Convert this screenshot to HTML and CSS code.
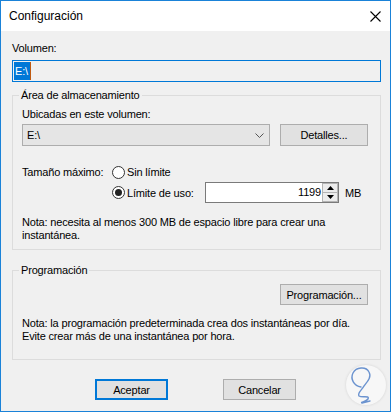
FILE: index.html
```html
<!DOCTYPE html>
<html lang="es">
<head>
    <meta charset="UTF-8">
    <meta name="viewport" content="width=device-width, initial-scale=1.0">
    <title>Configuración</title>
    <link rel="stylesheet" href="styles.css">
</head>
<body>
    <div class="window">
        <div class="titlebar">
            <span class="title">Configuración</span>
            <svg class="close" width="11" height="11" viewBox="0 0 11 11">
                <path d="M0.5 0.5 L10.5 10.5 M10.5 0.5 L0.5 10.5" stroke="#000" stroke-width="1.1" fill="none"/>
            </svg>
        </div>

        <div class="content">
            <div class="label">Volumen:</div>
            <div class="volume-box"><span class="selected">E:\</span><span class="caret"></span></div>

            <fieldset class="group storage">
                <legend>Área de almacenamiento</legend>
                <div class="label first">Ubicadas en este volumen:</div>
                <div class="combo-row">
                    <div class="combo">
                        <span>E:\</span>
                        <svg class="chevron" width="9" height="5" viewBox="0 0 9 5">
                            <path d="M0.5 0.5 L4.5 4.5 L8.5 0.5" stroke="#555" stroke-width="1" fill="none"/>
                        </svg>
                    </div>
                    <button class="btn details">Detalles...</button>
                </div>

                <div class="size-grid">
                    <div class="size-label">Tamaño máximo:</div>
                    <label class="radio row1"><span class="circle"></span>Sin límite</label>
                    <label class="radio row2"><span class="circle checked"></span>Límite de uso:</label>
                    <div class="spin">
                        <span class="spin-value">1199</span>
                        <div class="spin-buttons">
                            <span class="spin-btn">
                                <svg width="7" height="4" viewBox="0 0 7 4"><path d="M3.5 0 L7 4 L0 4 Z" fill="#000"/></svg>
                            </span>
                            <span class="spin-btn">
                                <svg width="7" height="4" viewBox="0 0 7 4"><path d="M0 0 L7 0 L3.5 4 Z" fill="#000"/></svg>
                            </span>
                        </div>
                    </div>
                    <span class="unit">MB</span>
                </div>

                <p class="note storage-note">Nota: necesita al menos 300 MB de espacio libre para crear una<br>instantánea.</p>
            </fieldset>

            <fieldset class="group schedule">
                <legend>Programación</legend>
                <button class="btn program">Programación...</button>
                <p class="note schedule-note">Nota: la programación predeterminada crea dos instantáneas por día.<br>Evite crear más de una instantánea por hora.</p>
            </fieldset>

            <div class="actions">
                <button class="btn action default">Aceptar</button>
                <button class="btn action">Cancelar</button>
            </div>
        </div>

        <div class="watermark">
            <svg width="40" height="40" viewBox="0 0 40 40">
                <path d="M15 22 C8 21 4 14 7 8 C10 2 20 1 23 7 C26 12 21 17 18 21 C16 25 11 28 13 31 C16 33 24 30 22 34 C20 37 14 37 16 38 L24 36"
                      stroke="#6b93cf" stroke-width="1.4" fill="none" stroke-linecap="round" stroke-linejoin="round"/>
            </svg>
        </div>
    </div>
</body>
</html>
```

FILE: styles.css
```css
body {
    margin: 0;
    padding: 0;
    font-family: "Liberation Sans", Arial, sans-serif;
    font-size: 11px;
    letter-spacing: -0.17px;
    color: #000;
    background: #f0f0f0;
}
.window {
    position: relative;
    width: 391px;
    height: 412px;
    box-sizing: border-box;
    border: 1px solid #1a82d8;
    background: #f0f0f0;
}
.titlebar {
    height: 30px;
    background: #fff;
    display: flex;
    align-items: center;
    justify-content: space-between;
    padding-left: 8px;
}
.title {
    font-size: 12px;
    letter-spacing: 0;
    line-height: 30px;
}
.close {
    margin-right: 9px;
}
.content {
    padding: 11px 9px 0 11px;
}
.label {
    line-height: 13px;
}
.label.first {
    margin-top: 6px;
}
.volume-box {
    margin-top: 5px;
    height: 22px;
    box-sizing: border-box;
    border: 1px solid #0078d7;
    background: #f0f0f0;
    padding: 1px 0 1px 1px;
    display: flex;
}
.selected {
    display: inline-block;
    height: 18px;
    line-height: 18px;
    padding: 0 2px 0 1px;
    background: #0078d7;
    color: #fff;
}
.caret {
    width: 1px;
    height: 18px;
    background: #c05a10;
}

/* group boxes */
.group {
    margin: 0;
    border: 1px solid #dcdcdc;
    padding: 0 12px 7px 9px;
    min-width: 0;
}
.group legend {
    padding: 0 2px;
    margin-left: -3px;
    line-height: 13px;
}
.storage {
    margin-top: 7px;
}
.schedule {
    margin-top: 14px;
    padding-bottom: 16px;
}
.combo-row {
    margin-top: 3px;
    display: flex;
    gap: 10px;
}
.combo {
    width: 248px;
    height: 22px;
    box-sizing: border-box;
    border: 1px solid #adadad;
    background: #e5e5e5;
    display: flex;
    align-items: center;
    justify-content: space-between;
    padding: 0 4px 0 4px;
}
.chevron {
    margin-right: 1px;
}
.btn {
    font-family: inherit;
    font-size: 11px;
    letter-spacing: -0.17px;
    color: #000;
    background: #e1e1e1;
    border: 1px solid #adadad;
    padding: 0;
    margin: 0;
    box-sizing: border-box;
}
.details {
    width: 88px;
    height: 22px;
}

/* size limit */
.size-grid {
    margin-top: 16px;
    display: grid;
    grid-template-columns: 90px 93px 134px auto;
    grid-template-rows: 20px 21px;
    align-items: center;
}
.size-label {
    grid-column: 1;
    grid-row: 1;
}
.radio {
    display: flex;
    align-items: center;
    gap: 2px;
}
.radio.row1 {
    grid-column: 2 / span 3;
    grid-row: 1;
}
.radio.row2 {
    grid-column: 2;
    grid-row: 2;
}
.circle {
    width: 13px;
    height: 13px;
    box-sizing: border-box;
    border: 1px solid #333;
    border-radius: 50%;
    background: #fff;
    display: flex;
    align-items: center;
    justify-content: center;
}
.circle.checked::after {
    content: "";
    width: 7px;
    height: 7px;
    border-radius: 50%;
    background: #222;
}
.spin {
    grid-column: 3;
    grid-row: 2;
    height: 21px;
    box-sizing: border-box;
    border: 1px solid #7a7a7a;
    background: #fff;
    display: flex;
}
.spin-value {
    flex: 1;
    text-align: right;
    line-height: 19px;
    padding-right: 1px;
}
.spin-buttons {
    width: 16px;
    display: flex;
    flex-direction: column;
}
.spin-btn {
    flex: 1;
    box-sizing: border-box;
    border: 1px solid #b4b4b4;
    background: #ececec;
    display: flex;
    align-items: center;
    justify-content: center;
}
.spin-btn + .spin-btn {
    border-top: none;
}
.unit {
    grid-column: 4;
    grid-row: 2;
    margin-left: 6px;
}
.note {
    margin: 0;
    line-height: 13px;
}
.storage-note {
    margin-top: 13px;
}
.program {
    display: block;
    margin: 7px 0 0 auto;
    width: 88px;
    height: 21px;
}
.schedule-note {
    margin-top: 12px;
}

/* dialog buttons */
.actions {
    margin-top: 19px;
    display: flex;
    justify-content: center;
    gap: 55px;
    padding-right: 2px;
}
.action {
    width: 73px;
    height: 21px;
}
.action.default {
    border: 2px solid #0078d7;
}
.watermark {
    position: absolute;
    right: 4px;
    bottom: 6px;
    width: 40px;
    height: 40px;
    border-radius: 50%;
    background: #f7f7f7;
    box-shadow: 0 0 3px rgba(0, 0, 0, 0.12);
}
```
